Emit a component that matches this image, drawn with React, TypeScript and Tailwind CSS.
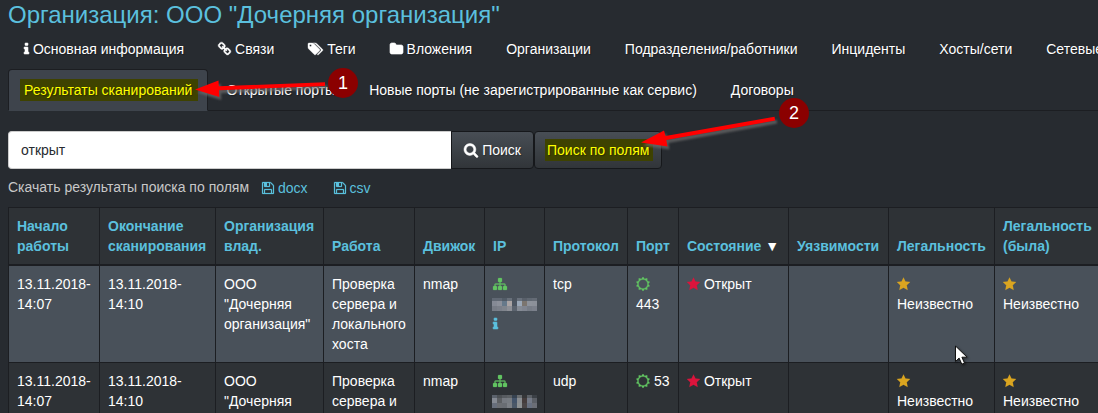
import type { ReactNode } from "react";

const ICONS = {
  info: {
    box: "576 0 640 1792",
    size: "w-[5px]",
    weight: 70,
    d: "M1216 1344v128q0 26-19 45t-45 19h-512q-26 0-45-19t-19-45v-128q0-26 19-45t45-19h64v-384h-64q-26 0-45-19t-19-45v-128q0-26 19-45t45-19h384q26 0 45 19t19 45v576h64q26 0 45 19t19 45zm-128-1152v192q0 26-19 45t-45 19h-256q-26 0-45-19t-19-45v-192q0-26 19-45t45-19h256q26 0 45 19t19 45z",
  },
  link: {
    box: "64 0 1664 1792",
    size: "w-[13px]",
    weight: 50,
    d: "M1520 1216q0-40-28-68l-208-208q-28-28-68-28-42 0-72 32 3 3 19 18.5t21.5 21.5 15 19 13 25.5 3.5 27.5q0 40-28 68t-68 28q-15 0-27.5-3.5t-25.5-13-19-15-21.5-21.5-18.5-19q-33 31-33 73 0 40 28 68l206 207q27 27 68 27 40 0 68-26l147-146q28-28 28-67zm-703-705q0-40-28-68l-206-207q-28-28-68-28-39 0-68 27l-147 146q-28 28-28 67 0 40 28 68l208 208q27 27 68 27 42 0 72-31-3-3-19-18.5t-21.5-21.5-15-19-13-25.5-3.5-27.5q0-40 28-68t68-28q15 0 27.5 3.5t25.5 13 19 15 21.5 21.5 18.5 19q33-31 33-73zm895 705q0 120-85 203l-147 146q-83 83-203 83-121 0-204-85l-206-207q-83-83-83-203 0-123 88-209l-88-88q-86 88-208 88-120 0-204-84l-208-208q-84-84-84-204t85-203l147-146q83-83 203-83 121 0 204 85l206 207q83 83 83 203 0 123-88 209l88 88q86-88 208-88 120 0 204 84l208 208q84 84 84 204z",
  },
  tags: {
    box: "0 0 1920 1792",
    size: "w-[15px]",
    weight: 50,
    d: "M448 448q0-53-37.5-90.5t-90.5-37.5-90.5 37.5-37.5 90.5 37.5 90.5 90.5 37.5 90.5-37.5 37.5-90.5zm1067 576q0 53-37 90l-491 492q-39 37-91 37-53 0-90-37l-715-716q-38-37-64.5-101t-26.5-117v-416q0-52 38-90t90-38h416q53 0 117 26.5t102 64.5l715 714q37 39 37 91zm384 0q0 53-37 90l-491 492q-39 37-91 37-36 0-59-14t-53-45l470-470q37-37 37-90 0-52-37-91l-715-714q-38-38-102-64.5t-117-26.5h224q53 0 117 26.5t102 64.5l715 714q37 39 37 91z",
  },
  folder: {
    box: "64 0 1664 1792",
    size: "w-[13px]",
    weight: 80,
    d: "M1728 608v704q0 92-66 158t-158 66h-1216q-92 0-158-66t-66-158v-960q0-92 66-158t158-66h320q92 0 158 66t66 158v32h672q92 0 158 66t66 158z",
  },
  search: {
    box: "64 64 1664 1664",
    size: "w-[14px]",
    weight: 60,
    d: "M1216 832q0-185-131.5-316.5t-316.5-131.5-316.5 131.5-131.5 316.5 131.5 316.5 316.5 131.5 316.5-131.5 131.5-316.5zm512 832q0 52-38 90t-90 38q-54 0-90-38l-343-342q-179 124-399 124-143 0-273.5-55.5t-225-150-150-225-55.5-273.5 55.5-273.5 150-225 225-150 273.5-55.5 273.5 55.5 225 150 150 225 55.5 273.5q0 220-124 399l343 343q37 37 37 90z",
  },
  save: {
    box: "128 0 1536 1792",
    size: "w-[12px]",
    weight: 30,
    d: "M512 1536h768v-384h-768v384zm896 0h128v-896q0-14-10-38.5t-20-34.5l-281-281q-10-10-34-20t-39-10v416q0 40-28 68t-68 28h-576q-40 0-68-28t-28-68v-416h-128v1280h128v-416q0-40 28-68t68-28h832q40 0 68 28t28 68v416zm-384-928v-320q0-13-9.5-22.5t-22.5-9.5h-192q-13 0-22.5 9.5t-9.5 22.5v320q0 13 9.5 22.5t22.5 9.5h192q13 0 22.5-9.5t9.5-22.5zm640 32v928q0 40-28 68t-68 28h-1344q-40 0-68-28t-28-68v-1344q0-40 28-68t68-28h928q40 0 88 20t76 48l280 280q28 28 48 76t20 88z",
  },
  sitemap: {
    box: "0 0 1792 1792",
    size: "w-[14px]",
    weight: 30,
    d: "M1792 1248v320q0 40-28 68t-68 28h-320q-40 0-68-28t-28-68v-320q0-40 28-68t68-28h96v-192h-512v192h96q40 0 68 28t28 68v320q0 40-28 68t-68 28h-320q-40 0-68-28t-28-68v-320q0-40 28-68t68-28h96v-192h-512v192h96q40 0 68 28t28 68v320q0 40-28 68t-68 28h-320q-40 0-68-28t-28-68v-320q0-40 28-68t68-28h96v-192q0-52 38-90t90-38h512v-192h-96q-40 0-68-28t-28-68v-320q0-40 28-68t68-28h320q40 0 68 28t28 68v320q0 40-28 68t-68 28h-96v192h512q52 0 90 38t38 90v192h96q40 0 68 28t28 68z",
  },
  sun: {
    box: "0 0 1792 1792",
    size: "w-[14px]",
    weight: 40,
    d: "M1472 896q0-117-45.5-223.5t-123-184-184-123-223.5-45.5-223.5 45.5-184 123-123 184-45.5 223.5 45.5 223.5 123 184 184 123 223.5 45.5 223.5-45.5 184-123 123-184 45.5-223.5zm276 277q-4 15-20 20l-292 96v306q0 16-13 26-15 10-29 4l-292-94-180 248q-10 13-26 13t-26-13l-180-248-292 94q-14 6-29-4-13-10-13-26v-306l-292-96q-16-5-20-20-5-17 4-29l180-248-180-248q-9-13-4-29 4-15 20-20l292-96v-306q0-16 13-26 15-10 29-4l292 94 180-248q9-12 26-12t26 12l180 248 292-94q14-6 29 4 13 10 13 26v306l292 96q16 5 20 20 5 16-4 29l-180 248 180 248q9 12 4 29z",
  },
  star: {
    box: "64 0 1664 1792",
    size: "w-[13px]",
    weight: 20,
    d: "M896 50 1150 590 1745 640 1310 1060 1425 1660 896 1370 367 1660 482 1060 47 640 642 590Z",
  },
};

function Icon({ name, className = "" }: { name: keyof typeof ICONS; className?: string }) {
  const icon = ICONS[name];
  return (
    <svg
      viewBox={icon.box}
      fill="currentColor"
      stroke="currentColor"
      strokeWidth={icon.weight}
      aria-hidden="true"
      className={`inline-block h-[14px] overflow-visible align-[-2px] ${icon.size} ${className}`}
    >
      <path d={icon.d} />
    </svg>
  );
}

function Tab({ children, active = false }: { children: ReactNode; active?: boolean }) {
  return (
    <li className="-mb-px">
      <a
        href="#"
        aria-current={active ? "page" : undefined}
        className={`mr-0.5 block rounded-t border px-[15px] py-2.5 ${
          active ? "border-[#1c1e22] border-b-transparent bg-[#3e444c]" : "border-transparent"
        }`}
      >
        {children}
      </a>
    </li>
  );
}

function Mark({ children, className }: { children: ReactNode; className: string }) {
  return <span className={`bg-[#3e4200] py-[3px] text-[#ffff00] ${className}`}>{children}</span>;
}

function Mosaic({ tones }: { tones: string[][] }) {
  return (
    <svg viewBox="0 0 45 13" className="-ml-px h-[13px] w-[45px] shrink-0" shapeRendering="crispEdges" aria-hidden="true">
      {tones.map((row, r) =>
        row.map((tone, c) => (
          <rect key={`${r}-${c}`} x={c * 5} y={r === 0 ? 0 : r * 5 - 2} width="5" height={r === 0 ? 3 : 5} fill={tone} />
        )),
      )}
    </svg>
  );
}

const MOSAIC_A = [
  ["#606873", "#606873", "#525c67", "#68707a", "#4b535d", "#69717c", "#59606a", "#606872", "#646b75"],
  ["#858a95", "#8c909a", "#66798a", "#aaa4a4", "#4c5561", "#9aa7b7", "#7b756f", "#8d929b", "#8b9099"],
  ["#777c86", "#7b808a", "#80858d", "#8d9097", "#5b636e", "#858b95", "#808590", "#777d87", "#7b808b"],
];
const MOSAIC_B = [
  ["#5b626c", "#4c5054", "#575b60", "#5c6064", "#364250", "#696d70", "#353638", "#5b6066", "#3b4046"],
  ["#858a93", "#5c5f63", "#757980", "#777c82", "#44546a", "#8a8e92", "#453d3d", "#747a87", "#5b5f66"],
  ["#686f7c", "#6b6e73", "#696d73", "#7b7f85", "#4b5868", "#8d9193", "#4a4546", "#687080", "#6b6e76"],
];

const COLUMNS = [
  { title: "Начало работы", width: "w-[91px]" },
  { title: "Окончание сканирования", width: "w-[116px]" },
  { title: "Организация влад.", width: "w-[108px]" },
  { title: "Работа", width: "w-[91px]" },
  { title: "Движок", width: "w-[70px]" },
  { title: "IP", width: "w-[60px]" },
  { title: "Протокол", width: "w-[83px]" },
  { title: "Порт", width: "w-[51px]" },
  { title: "Состояние", width: "w-[110px]", sorted: true },
  { title: "Уязвимости", width: "w-[100px]" },
  { title: "Легальность", width: "w-[106px]" },
  { title: "Легальность (была)", width: "w-auto" },
];

const ROWS = [
  { protocol: "tcp", port: "443", mosaic: MOSAIC_A, hovered: true },
  { protocol: "udp", port: "53", mosaic: MOSAIC_B, hovered: false },
];

const cell = "border border-[#1c1e22] p-2 align-top";
const button =
  "border border-[#16181b] bg-linear-[#484e55,#3a3f44_60%,#313539] px-3 py-2 whitespace-nowrap text-white text-shadow-[1px_1px_1px_rgba(0,0,0,0.3)]";

function Badge({ children, className }: { children: ReactNode; className: string }) {
  return (
    <span
      className={`absolute flex size-[30px] items-center justify-center rounded-full bg-[#8b0000] text-[18px] leading-none text-white ${className}`}
    >
      {children}
    </span>
  );
}

export default function App() {
  return (
    <div className="relative h-screen overflow-hidden bg-[#272b30] px-2 font-['Liberation_Sans',Arial,sans-serif] text-sm leading-5 text-white">
      <h1 className="pt-px text-2xl leading-[27px] whitespace-nowrap text-[#5bc0de]">
        Организация: ООО "Дочерняя организация"
      </h1>

      <nav className="-mr-2 border-b border-[#1c1e22] whitespace-nowrap text-shadow-[1px_1px_1px_rgba(0,0,0,0.3)]">
        <ul className="flex">
          <Tab><Icon name="info" /> Основная информация</Tab>
          <Tab><Icon name="link" /> Связи</Tab>
          <Tab><Icon name="tags" /> Теги</Tab>
          <Tab><Icon name="folder" /> Вложения</Tab>
          <Tab>Организации</Tab>
          <Tab>Подразделения/работники</Tab>
          <Tab>Инциденты</Tab>
          <Tab>Хосты/сети</Tab>
          <Tab>Сетевые</Tab>
        </ul>
        <ul className="flex">
          <Tab active><Mark className="-mx-1.5 border-l-2 border-[#3e444c] pr-1.5 pl-1">Результаты сканирований</Mark></Tab>
          <Tab>Открытые порты</Tab>
          <Tab>Новые порты (не зарегистрированные как сервис)</Tab>
          <Tab>Договоры</Tab>
        </ul>
      </nav>

      <form className="mt-5 flex" onSubmit={(e) => e.preventDefault()}>
        <div className="flex w-[526px]">
          <input
            type="text"
            aria-label="Поиск"
            defaultValue="открыт"
            className="min-w-0 flex-1 rounded-l border border-r-0 border-[#cccccc] bg-white px-3 py-2 text-[#272b30] outline-none"
          />
          <button type="submit" className={`rounded-r ${button}`}>
            <Icon name="search" /> Поиск
          </button>
        </div>
        <button type="button" className={`rounded ${button}`}>
          <Mark className="-mr-1 -ml-0.5 pr-1 pl-0.5">Поиск по полям</Mark>
        </button>
      </form>

      <div className="mt-2 flex items-start text-[#c8c8c8]">
        <span>Скачать результаты поиска по полям</span>
        <a href="#" className="ml-[13px] pt-px text-[#5bc0de]"><Icon name="save" /> docx</a>
        <a href="#" className="ml-[26px] pt-px text-[#5bc0de]"><Icon name="save" /> csv</a>
      </div>

      <table className="mt-[9px] w-full min-w-[1094px] table-fixed border-collapse bg-[#2e3236]">
        <colgroup>
          {COLUMNS.map((c) => (
            <col key={c.title} className={c.width} />
          ))}
        </colgroup>
        <thead>
          <tr>
            {COLUMNS.map((c) => (
              <th
                key={c.title}
                className="border border-b-2 border-[#1c1e22] p-2 text-left align-bottom font-bold text-[#5bc0de]"
              >
                {c.title}
                {c.sorted && <span className="font-normal text-white"> ▼</span>}
              </th>
            ))}
          </tr>
        </thead>
        <tbody>
          {ROWS.map((r) => (
            <tr key={r.protocol} className={r.hovered ? "bg-[#49515a]" : ""}>
              <td className={cell}>13.11.2018-14:07</td>
              <td className={cell}>13.11.2018-14:10</td>
              <td className={cell}>ООО "Дочерняя организация"</td>
              <td className={cell}>Проверка сервера и локального хоста</td>
              <td className={cell}>nmap</td>
              <td className={cell}>
                <Icon name="sitemap" className="text-[#62c462]" />
                <div className="flex h-5 items-center"><Mosaic tones={r.mosaic} /></div>
                <Icon name="info" className="text-[#5bc0de]" />
              </td>
              <td className={cell}>{r.protocol}</td>
              <td className={cell}><Icon name="sun" className="text-[#62c462]" /> {r.port}</td>
              <td className={cell}><Icon name="star" className="text-[#dc143c]" /> Открыт</td>
              <td className={cell} />
              <td className={cell}><Icon name="star" className="text-[#daa520]" /> Неизвестно</td>
              <td className={cell}><Icon name="star" className="text-[#daa520]" /> Неизвестно</td>
            </tr>
          ))}
        </tbody>
      </table>

      <svg
        width="1098"
        height="413"
        viewBox="0 0 1098 413"
        className="pointer-events-none absolute top-0 left-0 max-w-none"
        aria-hidden="true"
      >
        <g fill="#ff0000" className="drop-shadow-[2px_3px_1px_rgba(110,110,110,0.7)]">
          <path d="M195 89.500 218.500 80.500 218.800 86.300 325 82.300V86L219 90.300 219.300 97Z" />
          <path d="M641 142.500 664 130.500 665.500 136 774.500 116.800 775.200 120.500 666.300 140 667.500 146.500Z" />
        </g>
        <path
          d="M955.500 346v15.500l3.600-3.400 2.700 6.100 2.700-1.200-2.600-5.800h5.200Z"
          fill="#fff"
          stroke="#111"
          className="drop-shadow-[1px_1px_1px_rgba(0,0,0,0.5)]"
        />
      </svg>
      <Badge className="top-[68px] left-[328px]">1</Badge>
      <Badge className="top-[98px] left-[779px]">2</Badge>
    </div>
  );
}
